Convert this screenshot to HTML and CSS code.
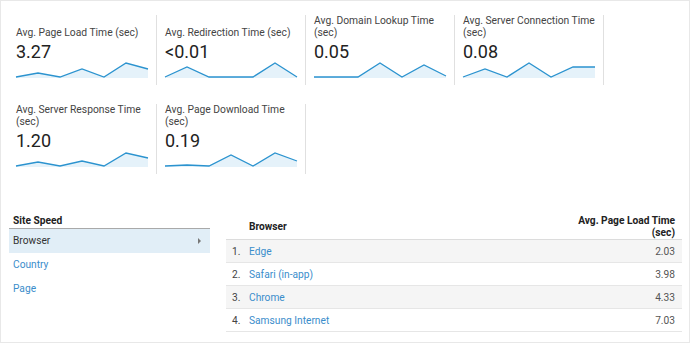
FILE: index.html
```html
<!DOCTYPE html>
<html>
<head>
<meta charset="utf-8">
<link rel="stylesheet" href="styles.css">
</head>
<body>
<div class="page">
  <div class="cards">
    <div class="card">
      <div class="title"><span>Avg. Page Load Time (sec)</span></div>
      <div class="value">3.27</div>
      <svg class="spark" viewBox="0 0 132 16" preserveAspectRatio="none"><polygon class="area" points="0,15 22,11 44,15 66,7 88,15 110,1 132,7 132,16 0,16"/><polyline class="line" points="0,15 22,11 44,15 66,7 88,15 110,1 132,7"/></svg>
    </div>
    <div class="card">
      <div class="title"><span>Avg. Redirection Time (sec)</span></div>
      <div class="value">&lt;0.01</div>
      <svg class="spark" viewBox="0 0 132 16" preserveAspectRatio="none"><polygon class="area" points="0,15 22,5 44,15 66,15 88,15 110,1 132,15 132,16 0,16"/><polyline class="line" points="0,15 22,5 44,15 66,15 88,15 110,1 132,15"/></svg>
    </div>
    <div class="card">
      <div class="title"><span>Avg. Domain Lookup Time (sec)</span></div>
      <div class="value">0.05</div>
      <svg class="spark" viewBox="0 0 132 16" preserveAspectRatio="none"><polygon class="area" points="0,15 22,15 44,15 66,1 88,15 110,3 132,14 132,16 0,16"/><polyline class="line" points="0,15 22,15 44,15 66,1 88,15 110,3 132,14"/></svg>
    </div>
    <div class="card">
      <div class="title"><span>Avg. Server Connection Time (sec)</span></div>
      <div class="value">0.08</div>
      <svg class="spark" viewBox="0 0 132 16" preserveAspectRatio="none"><polygon class="area" points="0,15 22,7 44,15 66,1 88,15 110,5 132,5 132,16 0,16"/><polyline class="line" points="0,15 22,7 44,15 66,1 88,15 110,5 132,5"/></svg>
    </div>
    <div class="card">
      <div class="title"><span>Avg. Server Response Time (sec)</span></div>
      <div class="value">1.20</div>
      <svg class="spark" viewBox="0 0 132 16" preserveAspectRatio="none"><polygon class="area" points="0,15 22,11 44,15 66,10 88,15 110,2 132,7 132,16 0,16"/><polyline class="line" points="0,15 22,11 44,15 66,10 88,15 110,2 132,7"/></svg>
    </div>
    <div class="card">
      <div class="title"><span>Avg. Page Download Time (sec)</span></div>
      <div class="value">0.19</div>
      <svg class="spark" viewBox="0 0 132 16" preserveAspectRatio="none"><polygon class="area" points="0,15 22,14 44,15 66,4 88,15 110,2 132,10 132,16 0,16"/><polyline class="line" points="0,15 22,14 44,15 66,4 88,15 110,2 132,10"/></svg>
    </div>
  </div>

  <div class="bottom">
    <div class="nav">
      <div class="nav-head">Site Speed</div>
      <div class="nav-item active"><span>Browser</span><span class="arrow"></span></div>
      <div class="nav-item link">Country</div>
      <div class="nav-item link">Page</div>
    </div>
    <div class="table">
      <div class="thead">
        <div class="th-name">Browser</div>
        <div class="th-val">Avg. Page Load Time<br>(sec)</div>
      </div>
      <div class="row shaded"><span class="rank">1.</span><span class="name">Edge</span><span class="num">2.03</span></div>
      <div class="row"><span class="rank">2.</span><span class="name">Safari (in-app)</span><span class="num">3.98</span></div>
      <div class="row shaded"><span class="rank">3.</span><span class="name">Chrome</span><span class="num">4.33</span></div>
      <div class="row"><span class="rank">4.</span><span class="name">Samsung Internet</span><span class="num">7.03</span></div>
    </div>
  </div>
</div>
</body>
</html>
```

FILE: styles.css
```css
* { box-sizing: border-box; }
html, body { margin: 0; padding: 0; background: #fff; }
body { font-family: Roboto, "Liberation Sans", Arial, sans-serif; color: #333; }

.page {
  width: 690px;
  height: 343px;
  border: 1px solid #e8e8e8;
  padding: 14px 7px 0 7px;
}

.cards {
  display: flex;
  flex-wrap: wrap;
  width: 596px;
  row-gap: 19px;
}
.card {
  width: 149px;
  height: 70px;
  padding: 0 8px;
  border-right: 1px solid #e0e0e0;
  display: flex;
  flex-direction: column;
}
.title {
  height: 24px;
  display: flex;
  align-items: flex-end;
  font-size: 10.3px;
  line-height: 12px;
  color: #444;
}
.value {
  margin-top: 3px;
  font-size: 18px;
  line-height: 20px;
  color: #222;
}
.spark {
  display: block;
  width: 132px;
  height: 16px;
  overflow: visible;
}
.spark .area { fill: #e5f2fa; stroke: none; }
.spark .line { fill: none; stroke: #2b93cf; stroke-width: 1.3; stroke-linejoin: miter; }

.bottom {
  display: flex;
  gap: 16px;
  margin-top: 38px;
  padding-left: 1px;
  font-size: 10.2px;
}
.nav { width: 201px; }
.nav-head {
  padding: 2px 4px 0;
  line-height: 14px;
  font-weight: bold;
  color: #222;
  border-bottom: 1px solid #a9a9a9;
}
.nav-item {
  height: 24px;
  line-height: 24px;
  padding: 0 9px 0 4px;
  display: flex;
  justify-content: space-between;
  align-items: center;
}
.nav-item.active { background: #e1eef7; color: #333; }
.nav-item.link { color: #3a8dcb; }
.arrow {
  width: 0;
  height: 0;
  border-top: 3px solid transparent;
  border-bottom: 3px solid transparent;
  border-left: 3px solid #777;
}

.table { flex: 1; }
.thead {
  display: flex;
  justify-content: space-between;
  align-items: center;
  padding: 3px 7px 0 23px;
  height: 28px;
  border-bottom: 1px solid #dcdcdc;
  font-weight: bold;
  color: #222;
  line-height: 12px;
}
.thead .th-val { text-align: right; align-self: flex-start; }
.row {
  display: flex;
  align-items: center;
  height: 23px;
  padding: 0 7px 0 6px;
  border-bottom: 1px solid #e6e6e6;
}
.row.shaded { background: #f5f5f5; }
.rank { width: 17px; color: #444; }
.name { flex: 1; color: #3a8dcb; }
.num { color: #555; }
```
